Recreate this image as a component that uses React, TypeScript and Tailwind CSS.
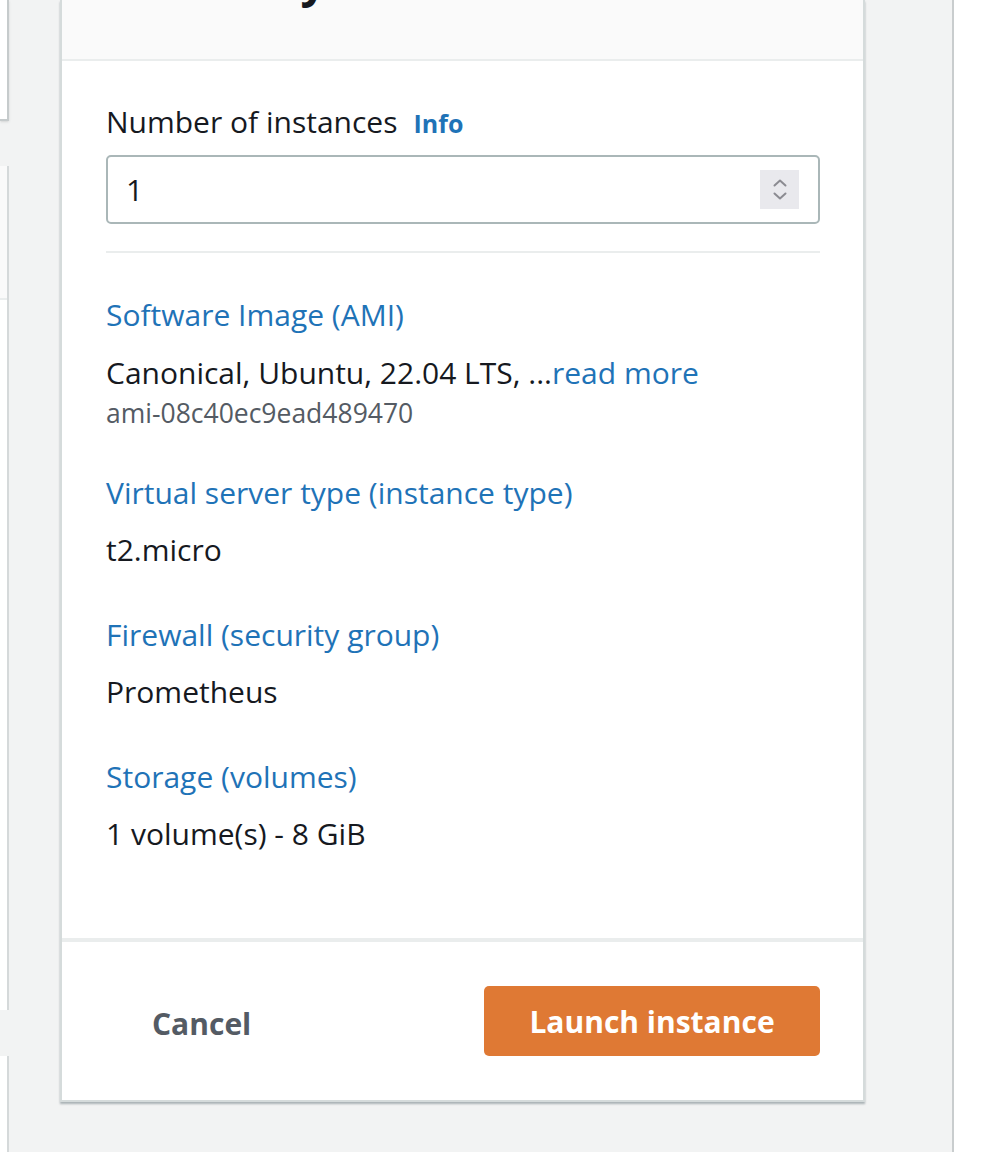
import { ReactNode } from 'react';

const font = { fontFamily: '"Open Sans", "Liberation Sans", sans-serif' };

function SectionLabel({ children, className = '' }: { children: ReactNode; className?: string }) {
  return <div className={`text-[30px] leading-[40px] text-[#1f73b7] ${className}`}>{children}</div>;
}

function SectionValue({ children, className = '' }: { children: ReactNode; className?: string }) {
  return <div className={`text-[30px] leading-[40px] text-[#16191f] ${className}`}>{children}</div>;
}

function Spinner() {
  return (
    <div className="w-[39px] h-[39px] bg-[#e9e9ed] flex flex-col items-center justify-center gap-[5px]">
      <svg width="16" height="9" viewBox="0 0 16 9" fill="none">
        <path d="M2.5 7.5 L8 2.5 L13.5 7.5" stroke="#8b8b91" strokeWidth="2" strokeLinecap="round" strokeLinejoin="round" />
      </svg>
      <svg width="16" height="9" viewBox="0 0 16 9" fill="none">
        <path d="M2.5 1.5 L8 6.5 L13.5 1.5" stroke="#8b8b91" strokeWidth="2" strokeLinecap="round" strokeLinejoin="round" />
      </svg>
    </div>
  );
}

export default function App() {
  return (
    <div className="w-[988px] h-[1152px] overflow-hidden bg-[#f2f3f3] flex" style={font}>
      {/* cut-off cards on the left */}
      <div className="w-[9px] flex flex-col shrink-0">
        <div className="h-[121px] bg-white border-r-2 border-b-2 border-[#c6cbcc] shadow-sm" />
        <div className="mt-[45px] h-[844px] bg-white border-r-2 border-[#d5d9da] flex flex-col">
          <div className="h-[134px] bg-[#fafafa] border-b-2 border-[#eaeded]" />
        </div>
        <div className="mt-[46px] flex-1 bg-white border-r-2 border-[#d5d9da]" />
      </div>

      {/* summary panel */}
      <div className="ml-[51px] w-[805px] shrink-0 self-start flex flex-col">
        <div className="bg-white border-x-2 border-b-2 border-[#d5dbdb] shadow-[0_2px_2px_rgba(0,28,36,0.3)]">
          <div className="h-[61px] bg-[#fafafa] border-b-2 border-[#eaeded] overflow-hidden px-[44px]">
            <h2 className="text-[46px] leading-[46px] font-bold text-[#16191f] mt-[-44px]">Summary</h2>
          </div>

          <div className="pl-[44px] pr-[43px] pt-[43px] pb-[84px]">
            <div className="flex items-baseline gap-[16px] leading-[36px]">
              <span className="text-[30px] text-[#16191f]">Number of instances</span>
              <span className="text-[25px] font-bold text-[#1f73b7]">Info</span>
            </div>
            <div className="mt-[14px] h-[69px] border-2 border-[#aab7b8] rounded-[5px] flex items-center justify-between pl-[18px] pr-[19px]">
              <span className="text-[30px] text-[#16191f]">1</span>
              <Spinner />
            </div>
            <div className="mt-[27px] h-[2px] bg-[#eaeded]" />

            <SectionLabel className="mt-[42px]">Software Image (AMI)</SectionLabel>
            <SectionValue className="mt-[18px]">
              Canonical, Ubuntu, 22.04 LTS, ...<span className="text-[#1f73b7]">read more</span>
            </SectionValue>
            <div className="mt-[4px] text-[26.5px] leading-[32px] text-[#545b64]">ami-08c40ec9ead489470</div>

            <SectionLabel className="mt-[44px]">Virtual server type (instance type)</SectionLabel>
            <SectionValue className="mt-[17px]">t2.micro</SectionValue>

            <SectionLabel className="mt-[45px]">Firewall (security group)</SectionLabel>
            <SectionValue className="mt-[17px]">Prometheus</SectionValue>

            <SectionLabel className="mt-[45px]">Storage (volumes)</SectionLabel>
            <SectionValue className="mt-[17px]">1 volume(s) - 8 GiB</SectionValue>
          </div>

          <div className="h-[4px] bg-[#eaeded]" />

          <div className="pl-[90px] pr-[43px] pt-[44px] pb-[44px] flex items-center justify-between">
            <button className="text-[30px] font-bold text-[#545b64] pt-[4px]">Cancel</button>
            <button className="w-[336px] h-[70px] rounded-[5px] bg-[#df7934] text-white text-[30px] font-bold">
              Launch instance
            </button>
          </div>
        </div>
      </div>

      {/* right edge */}
      <div className="flex-1" />
      <div className="w-[36px] shrink-0 bg-white border-l-2 border-[#c9cdce]" />
    </div>
  );
}
